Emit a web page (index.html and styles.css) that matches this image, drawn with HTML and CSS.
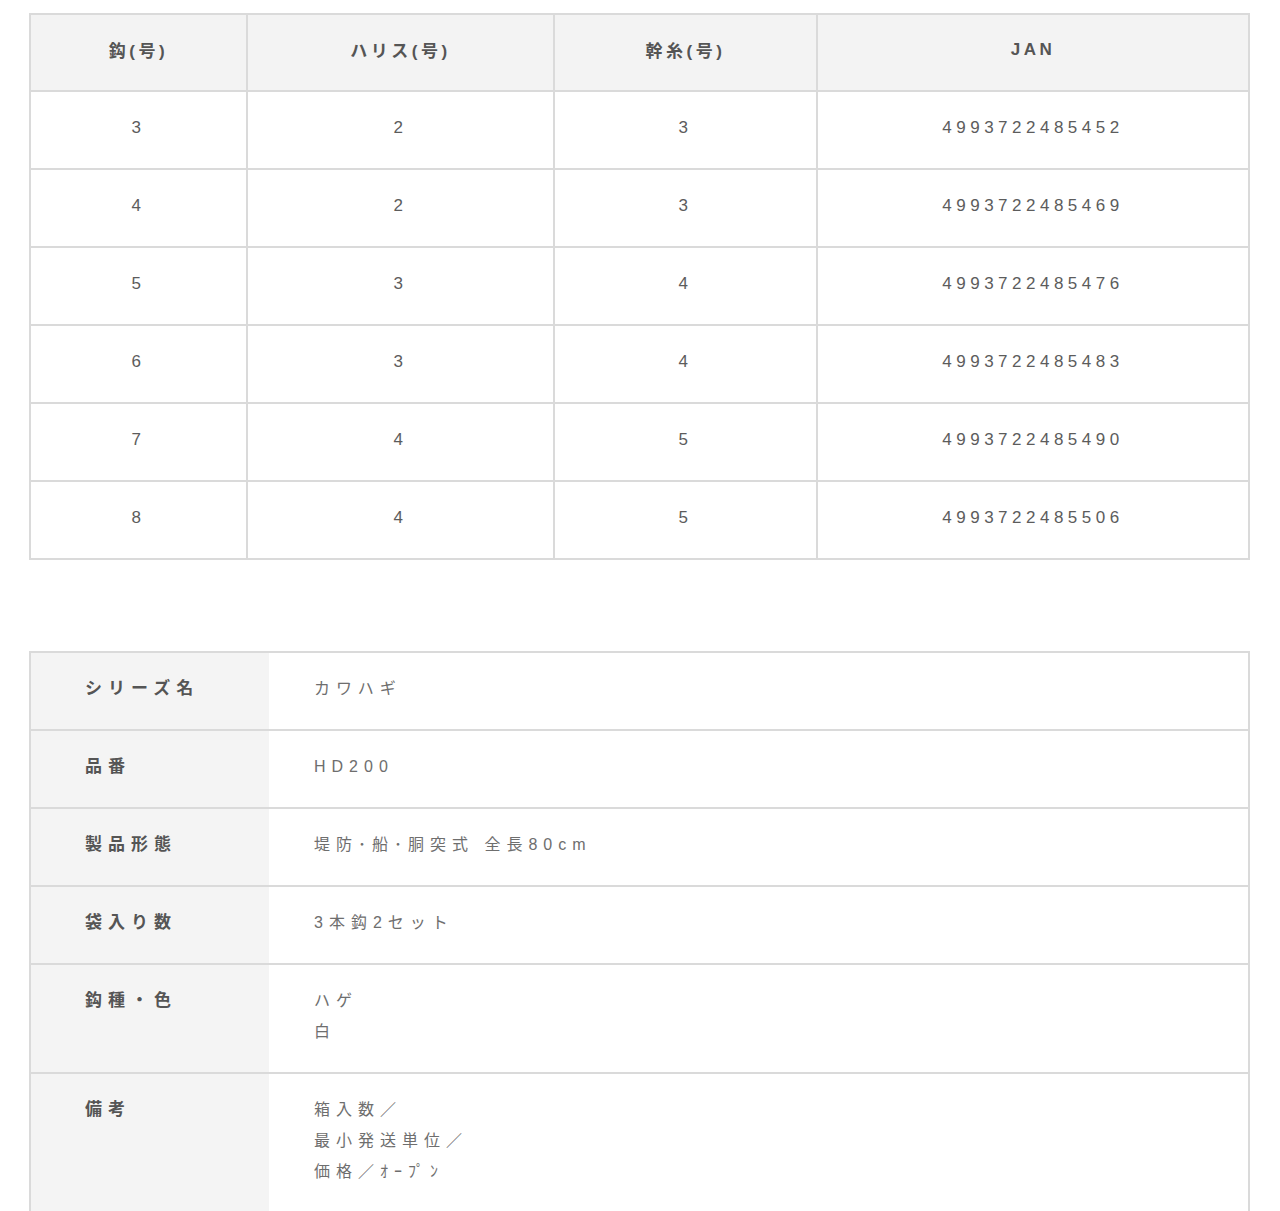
FILE: index.html
```html
<!DOCTYPE html>
<html lang="ja">
<head>
<meta charset="utf-8">
<title>HD200</title>
<link rel="stylesheet" href="styles.css">
</head>
<body>
<div class="page">
  <table class="spec">
    <colgroup>
      <col class="c1"><col class="c2"><col class="c3"><col class="c4">
    </colgroup>
    <thead>
      <tr><th>鈎(号)</th><th>ハリス(号)</th><th>幹糸(号)</th><th>JAN</th></tr>
    </thead>
    <tbody>
      <tr><td>3</td><td>2</td><td>3</td><td>4993722485452</td></tr>
      <tr><td>4</td><td>2</td><td>3</td><td>4993722485469</td></tr>
      <tr><td>5</td><td>3</td><td>4</td><td>4993722485476</td></tr>
      <tr><td>6</td><td>3</td><td>4</td><td>4993722485483</td></tr>
      <tr><td>7</td><td>4</td><td>5</td><td>4993722485490</td></tr>
      <tr><td>8</td><td>4</td><td>5</td><td>4993722485506</td></tr>
    </tbody>
  </table>

  <table class="info">
    <tbody>
      <tr><th>シリーズ名</th><td>カワハギ</td></tr>
      <tr><th>品番</th><td>HD200</td></tr>
      <tr><th>製品形態</th><td>堤防･船･胴突式 全長80cm</td></tr>
      <tr><th>袋入り数</th><td>3本鈎2セット</td></tr>
      <tr><th>鈎種・色</th><td>ハゲ<br>白</td></tr>
      <tr><th>備考</th><td>箱入数／<br>最小発送単位／<br>価格／ｵｰﾌﾟﾝ</td></tr>
    </tbody>
  </table>
</div>
</body>
</html>
```

FILE: styles.css
```css
html, body {
  margin: 0;
  padding: 0;
  background: #fff;
}
body {
  font-family: "Liberation Sans", "Noto Sans CJK JP", sans-serif;
  color: #5a5a5a;
}
.page {
  padding: 13px 30px 0 29px;
}
table {
  width: 100%;
  border-collapse: collapse;
  table-layout: fixed;
}
.spec {
  border: 2px solid #dadada;
}
.spec .c1 { width: 217px; }
.spec .c2 { width: 307px; }
.spec .c3 { width: 263px; }
.spec .c4 { width: auto; }
.spec th, .spec td {
  border: 2px solid #dadada;
  text-align: center;
  vertical-align: middle;
  letter-spacing: 4.5px;
  font-size: 17px;
}
.spec thead th {
  height: 69px;
  padding: 0 0 6px;
  background: #f3f3f3;
  font-weight: bold;
  color: #555;
  border-top: 0;
  letter-spacing: 3.5px;
}
.spec tbody td {
  height: 72px;
  padding: 0 0 4px;
  color: #5c5c5c;
}
.info {
  margin-top: 91px;
  border: 2px solid #dadada;
}
.info th, .info td {
  border-top: 2px solid #dadada;
  border-bottom: 2px solid #dadada;
  vertical-align: top;
  text-align: left;
  padding: 20px 0 25px;
  line-height: 31px;
  letter-spacing: 6px;
}
.info th {
  width: 184px;
  background: #f4f4f4;
  padding-left: 54px;
  font-weight: bold;
  font-size: 17px;
  color: #555;
}
.info td {
  padding-left: 45px;
  font-size: 16px;
  color: #6e6e6e;
}
```
